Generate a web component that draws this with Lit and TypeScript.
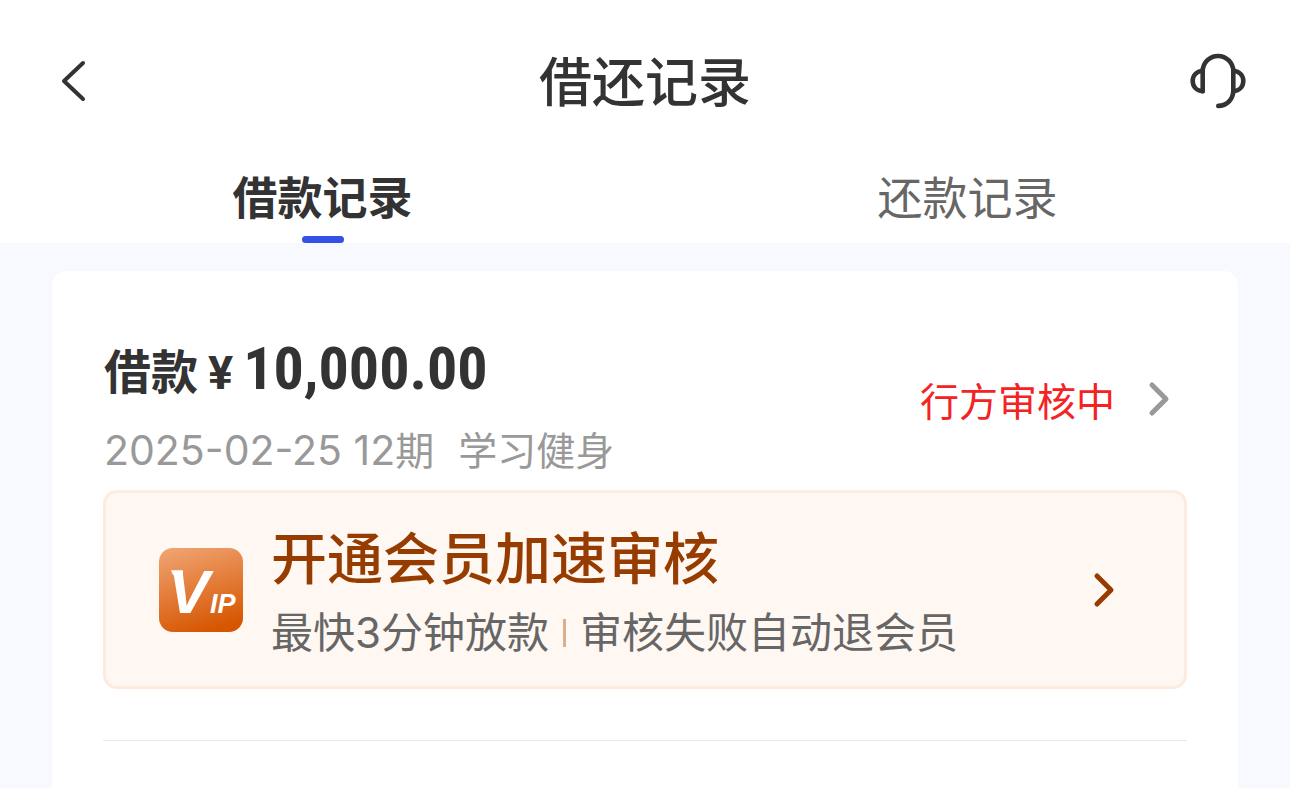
import { LitElement, html, css } from "lit";
import { customElement, property, state } from "lit/decorators.js";

type Tab = "borrow" | "repay";

@customElement("loan-record")
export class LoanRecord extends LitElement {
  @property() amount = "";
  @property() date = "";
  @property() term = "";
  @property() purpose = "";
  @property() status = "";

  static styles = css`
    :host {
      display: block;
      padding: 68px 51px 48px;
      border-radius: 14px;
      background: #fff;
    }
    * {
      box-sizing: border-box;
    }
    a {
      color: inherit;
      text-decoration: none;
    }
    svg {
      display: block;
      flex: none;
    }
    .summary {
      display: flex;
      align-items: flex-start;
      justify-content: space-between;
      padding: 0 16px 0 1px;
    }
    .amount {
      display: flex;
      align-items: baseline;
      margin: 0;
      height: 79px;
      line-height: 60px;
      font-size: 47px;
      font-weight: 700;
      color: #333;
    }
    .currency {
      margin: 0 10px;
      font-family: "Roboto", sans-serif;
    }
    .number {
      font-family: "Roboto Condensed", "Roboto", sans-serif;
      font-size: 60px;
    }
    .meta {
      display: flex;
      align-items: baseline;
      gap: 24px;
      margin: 0;
      height: 64px;
      line-height: 64px;
      font-family: "Inter", "Noto Sans CJK SC", sans-serif;
      font-size: 39px;
      color: #999;
    }
    .digits {
      font-size: 41px;
    }
    .status {
      display: flex;
      align-items: center;
      gap: 32px;
      margin-top: 28px;
      font-size: 39px;
      line-height: 64px;
      color: #f42222;
    }
    .promo {
      display: flex;
      align-items: center;
      margin-top: 8px;
      padding: 26px 68px 26px 53px;
      border: 3px solid #fdebdf;
      border-radius: 14px;
      background: #fff7f1;
    }
    .promo-text {
      flex: 1;
      margin-left: 28px;
    }
    .promo-title {
      margin: 0 0 15px;
      font-size: 56px;
      line-height: 72px;
      font-weight: 500;
      color: #963c00;
    }
    .promo-note {
      display: flex;
      align-items: center;
      margin: 0;
      font-family: "Inter", "Noto Sans CJK SC", sans-serif;
      font-size: 42px;
      line-height: 54px;
      color: #666;
    }
    .bar {
      width: 3px;
      height: 28px;
      margin: 0 14px;
      background: #dcae8c;
    }
    .vip {
      fill: #fff;
      font-family: "Liberation Sans", sans-serif;
      font-style: italic;
      font-weight: 700;
    }
    .vip-large {
      font-size: 62px;
    }
    .vip-small {
      font-size: 27px;
    }
    .rule {
      height: 1px;
      margin: 51px 0 0;
      border: 0;
      background: #e8e8e8;
    }
  `;

  render() {
    return html`
      <a class="summary" href="#detail">
        <div>
          <h2 class="amount">
            <span>借款</span><span class="currency">¥</span><span class="number">${this.amount}</span>
          </h2>
          <p class="meta">
            <span><span class="digits">${this.date} ${this.term}</span>期</span><span>${this.purpose}</span>
          </p>
        </div>
        <div class="status">
          <span>${this.status}</span>
          <svg width="24" height="36" viewBox="0 0 24 36" fill="none" stroke="#999" stroke-width="5" stroke-linecap="round" stroke-linejoin="round" aria-hidden="true">
            <path d="M5 4 19 18 5 32" />
          </svg>
        </div>
      </a>
      <a class="promo" href="#vip">
        <svg width="84" height="84" viewBox="0 0 84 84" aria-hidden="true">
          <defs>
            <linearGradient id="g" x1="0.3" y1="0" x2="0.6" y2="1">
              <stop offset="0" stop-color="#efa06c" />
              <stop offset="1" stop-color="#d65500" />
            </linearGradient>
          </defs>
          <rect width="84" height="84" rx="14" fill="url(#g)" />
          <g class="vip">
            <path d="M12 22.3H24V27H14Z" />
            <text class="vip-large" x="9" y="65">V</text>
            <text class="vip-small" x="51" y="65">IP</text>
          </g>
        </svg>
        <div class="promo-text">
          <h3 class="promo-title">开通会员加速审核</h3>
          <p class="promo-note">
            <span>最快3分钟放款</span><span class="bar"></span><span>审核失败自动退会员</span>
          </p>
        </div>
        <svg width="24" height="36" viewBox="0 0 24 36" fill="none" stroke="#963c00" stroke-width="5" stroke-linecap="round" stroke-linejoin="round" aria-hidden="true">
          <path d="M5 4 19 18 5 32" />
        </svg>
      </a>
      <hr class="rule" />
    `;
  }
}

@customElement("app-root")
export class AppRoot extends LitElement {
  @state() private tab: Tab = "borrow";

  static styles = css`
    :host {
      display: flex;
      flex-direction: column;
      min-height: 100vh;
      background: #f8f9fe;
      font-family: "Noto Sans CJK SC", sans-serif;
      color: #333;
    }
    * {
      box-sizing: border-box;
    }
    button {
      padding: 0;
      border: 0;
      background: none;
      color: inherit;
      font: inherit;
      cursor: pointer;
    }
    svg {
      display: block;
    }
    .top {
      background: #fff;
    }
    .nav {
      display: grid;
      grid-template-columns: 1fr auto 1fr;
      align-items: center;
      height: 162px;
      padding: 0 44px;
    }
    .back {
      justify-self: start;
      padding-left: 8px;
    }
    .help {
      justify-self: end;
    }
    .title {
      margin: 0;
      padding-bottom: 4px;
      font-size: 53px;
      line-height: 72px;
      font-weight: 500;
    }
    .tabs {
      display: grid;
      grid-template-columns: 1fr 1fr;
    }
    .tab {
      display: flex;
      flex-direction: column;
      align-items: center;
      gap: 6px;
      font-size: 45px;
      line-height: 68px;
      color: #666;
    }
    .tab::after {
      content: "";
      width: 42px;
      height: 7px;
      border-radius: 4px;
    }
    .tab[aria-selected="true"] {
      font-weight: 700;
      color: #333;
    }
    .tab[aria-selected="true"]::after {
      background: #3450e6;
    }
    .list {
      display: flex;
      flex: 1;
      flex-direction: column;
      padding: 28px 52px 0;
    }
    .record {
      flex: 1;
      border-radius: 14px 14px 0 0;
    }
  `;

  private renderTab(id: Tab, label: string) {
    return html`<button
      class="tab"
      role="tab"
      aria-selected=${this.tab === id ? "true" : "false"}
      @click=${() => (this.tab = id)}
    >${label}</button>`;
  }

  render() {
    return html`
      <header class="top">
        <div class="nav">
          <button class="back" aria-label="返回">
            <svg width="42" height="48" viewBox="0 0 42 48" fill="none" stroke="#333" stroke-width="4" stroke-linecap="round" stroke-linejoin="round">
              <path d="M31 6 12 24 31 42" />
            </svg>
          </button>
          <h1 class="title">借还记录</h1>
          <button class="help" aria-label="客服">
            <svg width="56" height="56" viewBox="0 0 56 56" fill="none" stroke="#333" stroke-width="4.6" stroke-linecap="round" stroke-linejoin="round">
              <path d="M12.7 38.3V18.3a15.3 15.3 0 0 1 30.6 0V37.5C43.3 46 37 52.9 28.3 52.9" />
              <path d="M12.7 17.7C6.5 18.3 2.7 22.5 2.7 28S6.5 37.7 12.7 38.3M43.3 17.7C49.5 18.3 53.3 22.5 53.3 28S49.5 37.7 43.3 38.3" />
            </svg>
          </button>
        </div>
        <div class="tabs" role="tablist">
          ${this.renderTab("borrow", "借款记录")}${this.renderTab("repay", "还款记录")}
        </div>
      </header>
      <main class="list">
        <loan-record
          class="record"
          amount="10,000.00"
          date="2025-02-25"
          term="12"
          purpose="学习健身"
          status="行方审核中"
        ></loan-record>
      </main>
    `;
  }
}
